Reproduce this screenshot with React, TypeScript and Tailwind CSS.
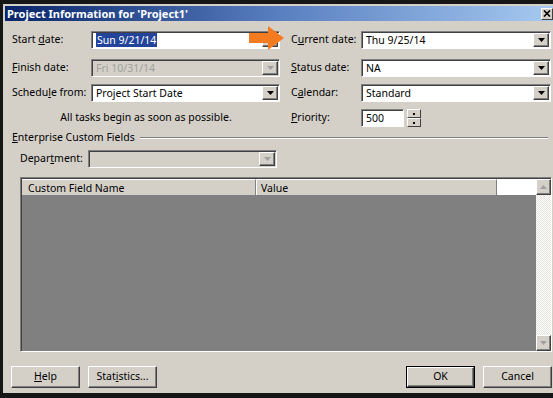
import React from "react";

const DownTri = ({ disabled }: { disabled?: boolean }) => (
  <svg width="7" height="4" viewBox="0 0 7 4">
    <path d="M0 0h7L3.5 4z" fill={disabled ? "#a0a0a0" : "#000"} />
  </svg>
);

const ComboBtn = ({ disabled }: { disabled?: boolean }) => (
  <div className="w-[16px] h-[14px] mr-px bg-[#d4d0c8] border border-t-white border-l-white border-b-[#404040] border-r-[#404040] shadow-[inset_-1px_-1px_0_#808080] flex items-center justify-center shrink-0">
    <DownTri disabled={disabled} />
  </div>
);

const Combo = ({
  children,
  width,
  disabled,
}: {
  children?: React.ReactNode;
  width: string;
  disabled?: boolean;
}) => (
  <div
    className={`${width} h-[18px] flex items-center shrink-0 border border-t-[#808080] border-l-[#808080] border-b-white border-r-white shadow-[inset_1px_1px_0_#404040] ${
      disabled ? "bg-[#d4d0c8] text-[#a0a0a0]" : "bg-white text-black"
    }`}
  >
    <div className="flex-1 pl-[4px] leading-[14px] whitespace-nowrap overflow-hidden">{children}</div>
    <ComboBtn disabled={disabled} />
  </div>
);

const Btn = ({ children, isDefault }: { children: React.ReactNode; isDefault?: boolean }) => (
  <div className={`w-[69px] h-[22px] shrink-0 ${isDefault ? "border border-black" : ""}`}>
    <div className="w-full h-full bg-[#d4d0c8] border border-t-white border-l-white border-b-[#404040] border-r-[#404040] shadow-[inset_-1px_-1px_0_#808080] flex items-center justify-center text-black">
      {children}
    </div>
  </div>
);

const ScrollBtn = ({ up }: { up?: boolean }) => (
  <div className="w-[15px] h-[16px] bg-[#d4d0c8] border border-t-white border-l-white border-b-[#404040] border-r-[#404040] shadow-[inset_-1px_-1px_0_#808080] flex items-center justify-center shrink-0">
    <svg width="7" height="4" viewBox="0 0 7 4">
      <path d={up ? "M0 4h7L3.5 0z" : "M0 0h7L3.5 4z"} fill="#a0a0a0" />
    </svg>
  </div>
);

export default function App() {
  return (
    <div className="relative w-[553px] h-[398px] overflow-hidden bg-[#161616] pt-[4px] pl-[3px] pb-[5px] font-['Noto_Sans',sans-serif] text-[10.5px] text-black">
      <div className="h-full bg-[#d4d0c8] pt-[2px] pl-[2px] flex flex-col">
        {/* Title bar */}
        <div className="h-[15px] bg-gradient-to-r from-[#0a246a] via-[#5a7fc0] to-[#a6caf0] flex items-center justify-between shrink-0">
          <span className="pl-[2px] text-white font-bold text-[11px] leading-[15px] whitespace-nowrap">
            Project Information for 'Project1'
          </span>
          <div className="w-[12px] h-[12px] bg-[#d4d0c8] border border-t-white border-l-white border-b-[#404040] border-r-[#404040] flex items-center justify-center">
            <svg width="8" height="7" viewBox="0 0 8 7">
              <path d="M1 0.5l6 6M7 0.5l-6 6" stroke="#000" strokeWidth="1.6" />
            </svg>
          </div>
        </div>

        <div className="pl-[7px] flex flex-col flex-1">
          {/* Row 1 */}
          <div className="mt-[10px] flex items-center">
            <div className="w-[79px] shrink-0">
              Start <u>d</u>ate:
            </div>
            <Combo width="w-[189px]">
              <span className="bg-[#23449a] text-white px-px">Sun 9/21/14</span>
            </Combo>
            <div className="w-[11px] shrink-0" />
            <div className="w-[70px] shrink-0">
              C<u>u</u>rrent date:
            </div>
            <Combo width="w-[190px]">Thu 9/25/14</Combo>
          </div>

          {/* Row 2 */}
          <div className="mt-[10px] flex items-center">
            <div className="w-[79px] shrink-0">
              <u>F</u>inish date:
            </div>
            <Combo width="w-[189px]" disabled>
              Fri 10/31/14
            </Combo>
            <div className="w-[11px] shrink-0" />
            <div className="w-[70px] shrink-0">
              <u>S</u>tatus date:
            </div>
            <Combo width="w-[190px]">NA</Combo>
          </div>

          {/* Row 3 */}
          <div className="mt-[7px] flex items-center">
            <div className="w-[79px] shrink-0">
              Schedu<u>l</u>e from:
            </div>
            <Combo width="w-[189px]">Project Start Date</Combo>
            <div className="w-[11px] shrink-0" />
            <div className="w-[70px] shrink-0">
              C<u>a</u>lendar:
            </div>
            <Combo width="w-[190px]">Standard</Combo>
          </div>

          {/* Row 4 */}
          <div className="mt-[7px] flex items-center">
            <div className="w-[268px] shrink-0 text-center">All tasks begin as soon as possible.</div>
            <div className="w-[11px] shrink-0" />
            <div className="w-[70px] shrink-0">
              <u>P</u>riority:
            </div>
            <div className="w-[43px] h-[18px] bg-white border border-t-[#808080] border-l-[#808080] border-b-white border-r-white shadow-[inset_1px_1px_0_#404040] pl-[4px] flex items-center leading-[14px]">
              500
            </div>
            <div className="ml-[3px] w-[14px] h-[18px] flex flex-col">
              {[0, 1].map((i) => (
                <div
                  key={i}
                  className="flex-1 bg-[#d4d0c8] border border-t-white border-l-white border-b-[#404040] border-r-[#404040] flex items-center justify-center"
                >
                  <div className="w-[2px] h-[2px] bg-black" />
                </div>
              ))}
            </div>
          </div>

          {/* Enterprise Custom Fields */}
          <div className="mt-[4px] flex items-center h-[14px] pr-[5px]">
            <span className="whitespace-nowrap">
              <u>E</u>nterprise Custom Fields
            </span>
            <div className="flex-1 ml-[5px] border-t border-t-[#808080] border-b border-b-white" />
          </div>

          {/* Department */}
          <div className="mt-[5px] pl-[8px] flex items-center">
            <div className="w-[68px] shrink-0">
              Depar<u>t</u>ment:
            </div>
            <Combo width="w-[189px]" disabled />
          </div>

          {/* Grid */}
          <div className="mt-[9px] ml-[8px] w-[532px] h-[175px] flex border border-t-[#808080] border-l-[#808080] border-b-white border-r-white shadow-[inset_1px_1px_0_#404040] pt-px pl-px">
            <div className="flex-1 flex flex-col">
              <div className="h-[16px] flex bg-[#d4d0c8] shrink-0">
                <div className="w-[234px] pl-[6px] leading-[16px] border-r border-r-[#808080] border-t border-t-white">
                  Custom Field Name
                </div>
                <div className="w-[241px] pl-[4px] leading-[16px] border-l border-l-white border-r border-r-[#808080] border-t border-t-white">
                  Value
                </div>
                <div className="flex-1 bg-white" />
              </div>
              <div className="flex-1 bg-[#808080]" />
            </div>
            <div className="w-[15px] flex flex-col bg-[repeating-conic-gradient(#e4e2dc_0%_25%,#ffffff_0%_50%)] bg-[length:2px_2px]">
              <ScrollBtn up />
              <div className="flex-1" />
              <ScrollBtn />
            </div>
          </div>

          {/* Buttons */}
          <div className="mt-[14px] ml-[-1px] flex items-center pr-[1px]">
            <Btn>
              <u>H</u>elp
            </Btn>
            <div className="w-[8px]" />
            <Btn>
              Stat<u>i</u>stics...
            </Btn>
            <div className="flex-1" />
            <Btn isDefault>OK</Btn>
            <div className="w-[8px]" />
            <Btn>Cancel</Btn>
          </div>
        </div>
      </div>

      {/* Orange annotation arrow */}
      <svg className="absolute left-[249px] top-[26px]" width="36" height="24" viewBox="0 0 36 24">
        <path d="M0 7h19V0l16 12-16 12v-7H0z" fill="#f47b20" />
      </svg>
    </div>
  );
}
